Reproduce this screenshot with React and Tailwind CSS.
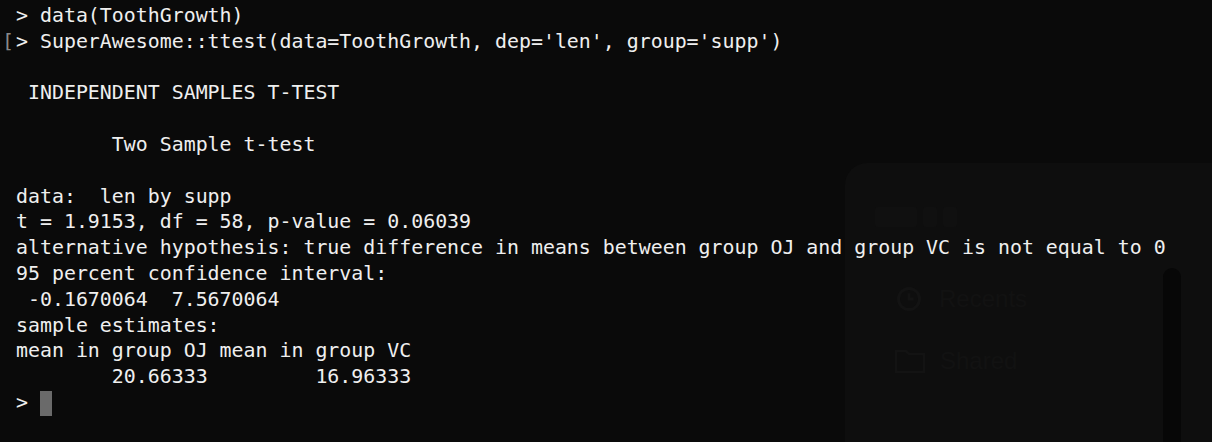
import React from "react";

const lines = [
  "> data(ToothGrowth)",
  "> SuperAwesome::ttest(data=ToothGrowth, dep='len', group='supp')",
  "",
  " INDEPENDENT SAMPLES T-TEST",
  "",
  "        Two Sample t-test",
  "",
  "data:  len by supp",
  "t = 1.9153, df = 58, p-value = 0.06039",
  "alternative hypothesis: true difference in means between group OJ and group VC is not equal to 0",
  "95 percent confidence interval:",
  " -0.1670064  7.5670064",
  "sample estimates:",
  "mean in group OJ mean in group VC ",
  "        20.66333         16.96333 ",
];

export default function App() {
  return (
    <div className="relative w-[1212px] h-[442px] overflow-hidden bg-[#0a0a0a]">
      {/* faint window behind the translucent terminal */}
      <div className="absolute left-[845px] top-[163px] w-[420px] h-[320px] rounded-tl-[22px] bg-[#0e0e0e] flex">
        <div className="flex flex-col pl-[30px] pt-[44px] w-[318px]">
          <div className="flex gap-[6px]">
            <div className="w-[42px] h-[20px] rounded-[3px] bg-[#101010]" />
            <div className="w-[14px] h-[20px] rounded-[3px] bg-[#101010]" />
            <div className="w-[14px] h-[20px] rounded-[3px] bg-[#101010]" />
          </div>
          <div className="flex flex-col gap-[34px] pl-[20px] pt-[58px] text-[#121212] text-[24px] leading-[28px] font-['Liberation_Sans',sans-serif]">
            <div className="flex items-center gap-[16px]">
              <svg width="28" height="28" viewBox="0 0 24 24" fill="none" stroke="#131313" strokeWidth="2.5">
                <circle cx="12" cy="12" r="9" />
                <path d="M12 7v5h4" />
              </svg>
              <span>Recents</span>
            </div>
            <div className="flex items-center gap-[14px] -ml-[1px]">
              <svg width="32" height="28" viewBox="0 0 32 28" fill="none" stroke="#131313" strokeWidth="2.5">
                <path d="M2 4h10l3 3h15v18H2z" />
              </svg>
              <span>Shared</span>
            </div>
          </div>
        </div>
        <div className="mt-[105px] w-[18px] h-[230px] rounded-t-[9px] bg-[#070707]" />
      </div>

      <div className="relative pt-[3px] pl-[16px] font-['DejaVu_Sans_Mono',monospace] text-[19.9px] leading-[25.8px] text-[#efefef]">
        {lines.map((l, i) => (
          <div key={i} className="relative h-[25.8px] whitespace-pre">
            {i === 1 && (
              <span className="absolute left-[-14px] top-0 text-[#8a8a8a]">[</span>
            )}
            {l}
          </div>
        ))}
        <div className="flex h-[25.8px] items-center whitespace-pre">
          <span>{"> "}</span>
          <span className="w-[12px] h-[25px] bg-[#6a6a6a] mt-[2px]" />
        </div>
      </div>
    </div>
  );
}
